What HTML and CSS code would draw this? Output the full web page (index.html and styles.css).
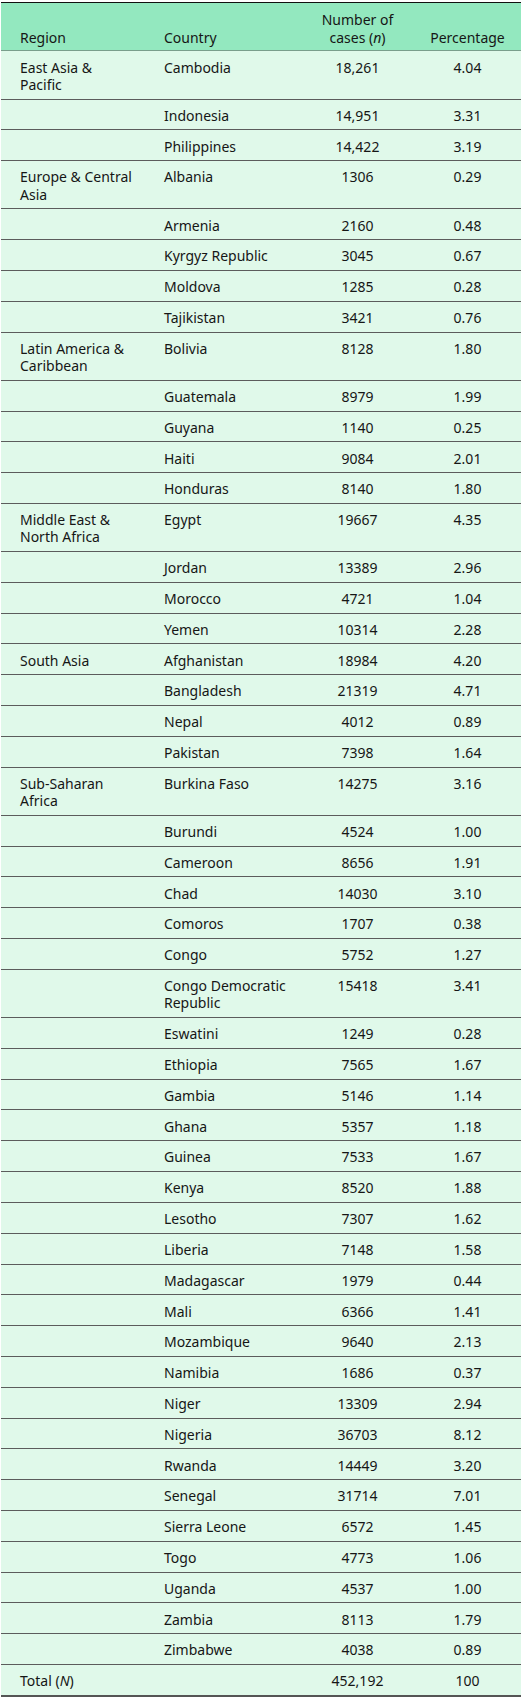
FILE: index.html
```html
<!DOCTYPE html>
<html lang="en">
<head>
<meta charset="utf-8">
<title>Cases by country</title>
<link rel="stylesheet" href="styles.css">
</head>
<body>
<table class="data">
  <colgroup>
    <col class="c-region">
    <col class="c-country">
    <col class="c-num">
    <col class="c-pct">
  </colgroup>
  <thead>
    <tr>
      <th class="region">Region</th>
      <th class="country">Country</th>
      <th class="num">Number of cases (<i>n</i>)</th>
      <th class="pct">Percentage</th>
    </tr>
  </thead>
  <tbody>
    <tr><td class="region">East Asia &amp; Pacific</td><td class="country">Cambodia</td><td class="num">18,261</td><td class="pct">4.04</td></tr>
    <tr><td class="region"></td><td class="country">Indonesia</td><td class="num">14,951</td><td class="pct">3.31</td></tr>
    <tr><td class="region"></td><td class="country">Philippines</td><td class="num">14,422</td><td class="pct">3.19</td></tr>
    <tr><td class="region">Europe &amp; Central Asia</td><td class="country">Albania</td><td class="num">1306</td><td class="pct">0.29</td></tr>
    <tr><td class="region"></td><td class="country">Armenia</td><td class="num">2160</td><td class="pct">0.48</td></tr>
    <tr><td class="region"></td><td class="country">Kyrgyz Republic</td><td class="num">3045</td><td class="pct">0.67</td></tr>
    <tr><td class="region"></td><td class="country">Moldova</td><td class="num">1285</td><td class="pct">0.28</td></tr>
    <tr><td class="region"></td><td class="country">Tajikistan</td><td class="num">3421</td><td class="pct">0.76</td></tr>
    <tr><td class="region">Latin America &amp; Caribbean</td><td class="country">Bolivia</td><td class="num">8128</td><td class="pct">1.80</td></tr>
    <tr><td class="region"></td><td class="country">Guatemala</td><td class="num">8979</td><td class="pct">1.99</td></tr>
    <tr><td class="region"></td><td class="country">Guyana</td><td class="num">1140</td><td class="pct">0.25</td></tr>
    <tr><td class="region"></td><td class="country">Haiti</td><td class="num">9084</td><td class="pct">2.01</td></tr>
    <tr><td class="region"></td><td class="country">Honduras</td><td class="num">8140</td><td class="pct">1.80</td></tr>
    <tr><td class="region">Middle East &amp; North Africa</td><td class="country">Egypt</td><td class="num">19667</td><td class="pct">4.35</td></tr>
    <tr><td class="region"></td><td class="country">Jordan</td><td class="num">13389</td><td class="pct">2.96</td></tr>
    <tr><td class="region"></td><td class="country">Morocco</td><td class="num">4721</td><td class="pct">1.04</td></tr>
    <tr><td class="region"></td><td class="country">Yemen</td><td class="num">10314</td><td class="pct">2.28</td></tr>
    <tr><td class="region">South Asia</td><td class="country">Afghanistan</td><td class="num">18984</td><td class="pct">4.20</td></tr>
    <tr><td class="region"></td><td class="country">Bangladesh</td><td class="num">21319</td><td class="pct">4.71</td></tr>
    <tr><td class="region"></td><td class="country">Nepal</td><td class="num">4012</td><td class="pct">0.89</td></tr>
    <tr><td class="region"></td><td class="country">Pakistan</td><td class="num">7398</td><td class="pct">1.64</td></tr>
    <tr><td class="region">Sub-Saharan Africa</td><td class="country">Burkina Faso</td><td class="num">14275</td><td class="pct">3.16</td></tr>
    <tr><td class="region"></td><td class="country">Burundi</td><td class="num">4524</td><td class="pct">1.00</td></tr>
    <tr><td class="region"></td><td class="country">Cameroon</td><td class="num">8656</td><td class="pct">1.91</td></tr>
    <tr><td class="region"></td><td class="country">Chad</td><td class="num">14030</td><td class="pct">3.10</td></tr>
    <tr><td class="region"></td><td class="country">Comoros</td><td class="num">1707</td><td class="pct">0.38</td></tr>
    <tr><td class="region"></td><td class="country">Congo</td><td class="num">5752</td><td class="pct">1.27</td></tr>
    <tr><td class="region"></td><td class="country">Congo Democratic Republic</td><td class="num">15418</td><td class="pct">3.41</td></tr>
    <tr><td class="region"></td><td class="country">Eswatini</td><td class="num">1249</td><td class="pct">0.28</td></tr>
    <tr><td class="region"></td><td class="country">Ethiopia</td><td class="num">7565</td><td class="pct">1.67</td></tr>
    <tr><td class="region"></td><td class="country">Gambia</td><td class="num">5146</td><td class="pct">1.14</td></tr>
    <tr><td class="region"></td><td class="country">Ghana</td><td class="num">5357</td><td class="pct">1.18</td></tr>
    <tr><td class="region"></td><td class="country">Guinea</td><td class="num">7533</td><td class="pct">1.67</td></tr>
    <tr><td class="region"></td><td class="country">Kenya</td><td class="num">8520</td><td class="pct">1.88</td></tr>
    <tr><td class="region"></td><td class="country">Lesotho</td><td class="num">7307</td><td class="pct">1.62</td></tr>
    <tr><td class="region"></td><td class="country">Liberia</td><td class="num">7148</td><td class="pct">1.58</td></tr>
    <tr><td class="region"></td><td class="country">Madagascar</td><td class="num">1979</td><td class="pct">0.44</td></tr>
    <tr><td class="region"></td><td class="country">Mali</td><td class="num">6366</td><td class="pct">1.41</td></tr>
    <tr><td class="region"></td><td class="country">Mozambique</td><td class="num">9640</td><td class="pct">2.13</td></tr>
    <tr><td class="region"></td><td class="country">Namibia</td><td class="num">1686</td><td class="pct">0.37</td></tr>
    <tr><td class="region"></td><td class="country">Niger</td><td class="num">13309</td><td class="pct">2.94</td></tr>
    <tr><td class="region"></td><td class="country">Nigeria</td><td class="num">36703</td><td class="pct">8.12</td></tr>
    <tr><td class="region"></td><td class="country">Rwanda</td><td class="num">14449</td><td class="pct">3.20</td></tr>
    <tr><td class="region"></td><td class="country">Senegal</td><td class="num">31714</td><td class="pct">7.01</td></tr>
    <tr><td class="region"></td><td class="country">Sierra Leone</td><td class="num">6572</td><td class="pct">1.45</td></tr>
    <tr><td class="region"></td><td class="country">Togo</td><td class="num">4773</td><td class="pct">1.06</td></tr>
    <tr><td class="region"></td><td class="country">Uganda</td><td class="num">4537</td><td class="pct">1.00</td></tr>
    <tr><td class="region"></td><td class="country">Zambia</td><td class="num">8113</td><td class="pct">1.79</td></tr>
    <tr><td class="region"></td><td class="country">Zimbabwe</td><td class="num">4038</td><td class="pct">0.89</td></tr>
    <tr class="total"><td class="region">Total (<i>N</i>)</td><td class="country"></td><td class="num">452,192</td><td class="pct">100</td></tr>
  </tbody>
</table>
</body>
</html>
```

FILE: styles.css
```css
html, body {
  margin: 0;
  padding: 0;
  background: #ffffff;
}

body {
  padding: 1.5px 2px 0 1px;
  font-family: "Noto Sans", "Open Sans", sans-serif;
  font-size: 14px;
  line-height: 17.3px;
  color: #161616;
}

.data {
  width: 520px;
  table-layout: fixed;
  border-collapse: collapse;
  border-spacing: 0;
  border-top: 1.5px solid #111111;
}

.c-region { width: 149px; }
.c-country { width: 155px; }
.c-num { width: 105px; }
.c-pct { width: 111px; }

.data th,
.data td {
  font-weight: normal;
  text-align: left;
  vertical-align: top;
  padding: 7.2px 8px 5.34px 8px;
}

.data thead tr {
  background: #93e8bf;
  border-bottom: 1px solid #7a9e8c;
}

.data thead th {
  vertical-align: bottom;
  padding-top: 8.9px;
  padding-bottom: 4.5px;
}

.data tbody tr {
  background: #e0f9ea;
  border-bottom: 1px solid #5c5c5c;
}

.data tbody tr.total {
  border-bottom: 2px solid #555555;
}

.data .region { padding-left: 19px; padding-right: 16px; }
.data .country { padding-left: 14px; }
.data .num { text-align: center; }
.data .pct { text-align: center; padding-left: 12px; padding-right: 8px; }
```
